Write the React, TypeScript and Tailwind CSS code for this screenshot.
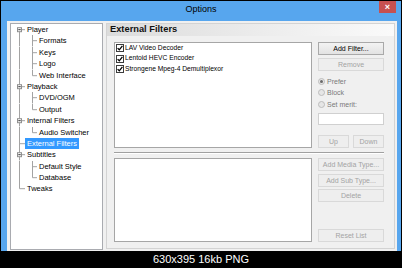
import React from "react";

const H = 11.4;
const LINE = "#a3a3a3";

type TNode = {
  label: string;
  level: 0 | 1;
  expander?: boolean;
  selected?: boolean;
  first?: boolean;
  last?: boolean;
  lastChild?: boolean;
};

const tree: TNode[] = [
  { label: "Player", level: 0, expander: true, first: true },
  { label: "Formats", level: 1 },
  { label: "Keys", level: 1 },
  { label: "Logo", level: 1 },
  { label: "Web Interface", level: 1, lastChild: true },
  { label: "Playback", level: 0, expander: true },
  { label: "DVD/OGM", level: 1 },
  { label: "Output", level: 1, lastChild: true },
  { label: "Internal Filters", level: 0, expander: true },
  { label: "Audio Switcher", level: 1, lastChild: true },
  { label: "External Filters", level: 0, selected: true },
  { label: "Subtitles", level: 0, expander: true },
  { label: "Default Style", level: 1 },
  { label: "Database", level: 1, lastChild: true },
  { label: "Tweaks", level: 0, last: true },
];

function Gutter({ n }: { n: TNode }) {
  const mid = H / 2;
  if (n.level === 0) {
    return (
      <svg width={14} height={H} className="shrink-0 block">
        <line x1={8.5} x2={8.5} y1={n.first ? mid : 0} y2={n.last ? mid : H} stroke={LINE} strokeWidth={1} />
        <line x1={8.5} x2={14} y1={mid} y2={mid} stroke={LINE} strokeWidth={1} />
        {n.expander && (
          <>
            <rect x={6.5} y={mid - 2} width={4} height={4} fill="#fdfdfd" stroke="#8f8f8f" strokeWidth={1} />
            <line x1={7.3} x2={9.7} y1={mid} y2={mid} stroke="#333" strokeWidth={1} />
          </>
        )}
      </svg>
    );
  }
  return (
    <svg width={26} height={H} className="shrink-0 block">
      <line x1={8.5} x2={8.5} y1={0} y2={H} stroke={LINE} strokeWidth={1} />
      <line x1={21.5} x2={21.5} y1={0} y2={n.lastChild ? mid : H} stroke={LINE} strokeWidth={1} />
      <line x1={21.5} x2={26} y1={mid} y2={mid} stroke={LINE} strokeWidth={1} />
    </svg>
  );
}

function Btn({
  children,
  disabled,
  className,
}: {
  children: React.ReactNode;
  disabled?: boolean;
  className?: string;
}) {
  return (
    <div
      className={`flex items-center justify-center h-[13px] border text-[7px] leading-none ${
        disabled
          ? "bg-[#eeeeee] border-[#d9d9d9] text-[#a3a3a3]"
          : "bg-linear-to-b from-[#f3f3f3] to-[#e2e2e2] border-[#a9a9a9] text-black"
      } ${className ?? ""}`}
    >
      {children}
    </div>
  );
}

function Radio({ label, checked }: { label: string; checked?: boolean }) {
  return (
    <div className="flex items-center h-[11.5px] gap-[2px]">
      <span className="w-[7px] h-[7px] rounded-full border border-[#bcbcbc] bg-[#e6e6e6] flex items-center justify-center shrink-0">
        {checked && <span className="w-[3px] h-[3px] rounded-full bg-[#6a6a6a]" />}
      </span>
      <span className="text-[7px] leading-none text-[#7a7a7a]">{label}</span>
    </div>
  );
}

function Check() {
  return (
    <span className="w-[8px] h-[8px] border border-[#3c3c3c] bg-white flex items-center justify-center shrink-0">
      <svg width={6} height={6} viewBox="0 0 6 6" className="block">
        <path d="M0.6 3.1 L2.3 4.8 L5.4 0.9" stroke="#000" strokeWidth={1.3} fill="none" />
      </svg>
    </span>
  );
}

const filters = ["LAV Video Decoder", "Lentoid HEVC Encoder", "Strongene Mpeg-4 Demultiplexor"];

export default function App() {
  return (
    <div className="w-[402px] h-[268px] bg-black flex flex-col overflow-hidden font-['Liberation_Sans',Arial,sans-serif]">
      <div className="mx-px mt-px w-[400px] h-[250px] bg-[#57a6ee] flex flex-col shrink-0">
        {/* title bar */}
        <div className="h-[20px] relative flex justify-center shrink-0 pt-[3px]">
          <span className="text-[9px] leading-[11px] text-black">Options</span>
          <div className="absolute right-[5px] top-0 w-[17px] h-[12px] bg-[#c75050] flex items-center justify-center text-white text-[9px] leading-none font-bold">
            ×
          </div>
        </div>
        {/* client */}
        <div className="ml-[6px] mr-[4px] flex-1 bg-[#f0f0f0] flex items-start pt-[2px] pl-[3px] pr-[2px]">
          {/* tree */}
          <div className="w-[93px] h-[227px] bg-white border border-[#a9abb0] flex flex-col shrink-0">
            {tree.map((n) => (
              <div key={n.label} className="flex items-stretch" style={{ height: H }}>
                <Gutter n={n} />
                <span
                  className={`px-[2px] text-[7.5px] leading-[11.4px] whitespace-nowrap ${
                    n.selected ? "bg-[#3399ff] text-white" : "text-black"
                  }`}
                >
                  {n.label}
                </span>
              </div>
            ))}
          </div>
          {/* page */}
          <div className="ml-[3px] w-[289px] h-[226px] border border-[#d3d3d3] flex flex-col shrink-0">
            <div className="h-[12px] bg-linear-to-r from-[#dcdcdc] to-[#fafafa] flex items-center pl-[3px]">
              <span className="text-[9.3px] font-bold leading-none text-[#111]">External Filters</span>
            </div>
            <div className="flex flex-col pl-[7px] pt-[6px]">
              {/* top row */}
              <div className="flex gap-[6px]">
                <div className="w-[198px] h-[106px] bg-white border border-[#a6a6a6] flex flex-col pl-px">
                  {filters.map((f) => (
                    <div key={f} className="flex items-center gap-[1px] h-[10.5px]">
                      <Check />
                      <span className="text-[6.7px] leading-none text-black whitespace-nowrap">{f}</span>
                    </div>
                  ))}
                </div>
                <div className="w-[66px] h-[106px] flex flex-col">
                  <Btn>Add Filter...</Btn>
                  <Btn disabled className="mt-[3px]">
                    Remove
                  </Btn>
                  <div className="mt-[4.5px] flex flex-col">
                    <Radio label="Prefer" checked />
                    <Radio label="Block" />
                    <Radio label="Set merit:" />
                  </div>
                  <div className="mt-[3px] h-[12px] bg-white border border-[#d0d0d0]" />
                  <div className="mt-auto flex gap-[4px]">
                    <Btn disabled className="w-[31px] h-[12px]">
                      Up
                    </Btn>
                    <Btn disabled className="w-[31px] h-[12px]">
                      Down
                    </Btn>
                  </div>
                </div>
              </div>
              {/* separator */}
              <div className="mt-[4px] w-[270px] h-[2px] border-t border-[#a0a0a0] border-b border-b-white" />
              {/* bottom row */}
              <div className="mt-[4px] flex gap-[6px]">
                <div className="w-[198px] h-[84px] bg-white border border-[#a6a6a6]" />
                <div className="w-[66px] h-[84px] flex flex-col">
                  <Btn disabled>Add Media Type...</Btn>
                  <Btn disabled className="mt-[3px]">
                    Add Sub Type...
                  </Btn>
                  <Btn disabled className="mt-[2px]">
                    Delete
                  </Btn>
                  <Btn disabled className="mt-auto">
                    Reset List
                  </Btn>
                </div>
              </div>
            </div>
          </div>
        </div>
      </div>
      <div className="flex-1 flex items-center justify-center text-white text-[11px] leading-none">
        630x395 16kb PNG
      </div>
    </div>
  );
}
